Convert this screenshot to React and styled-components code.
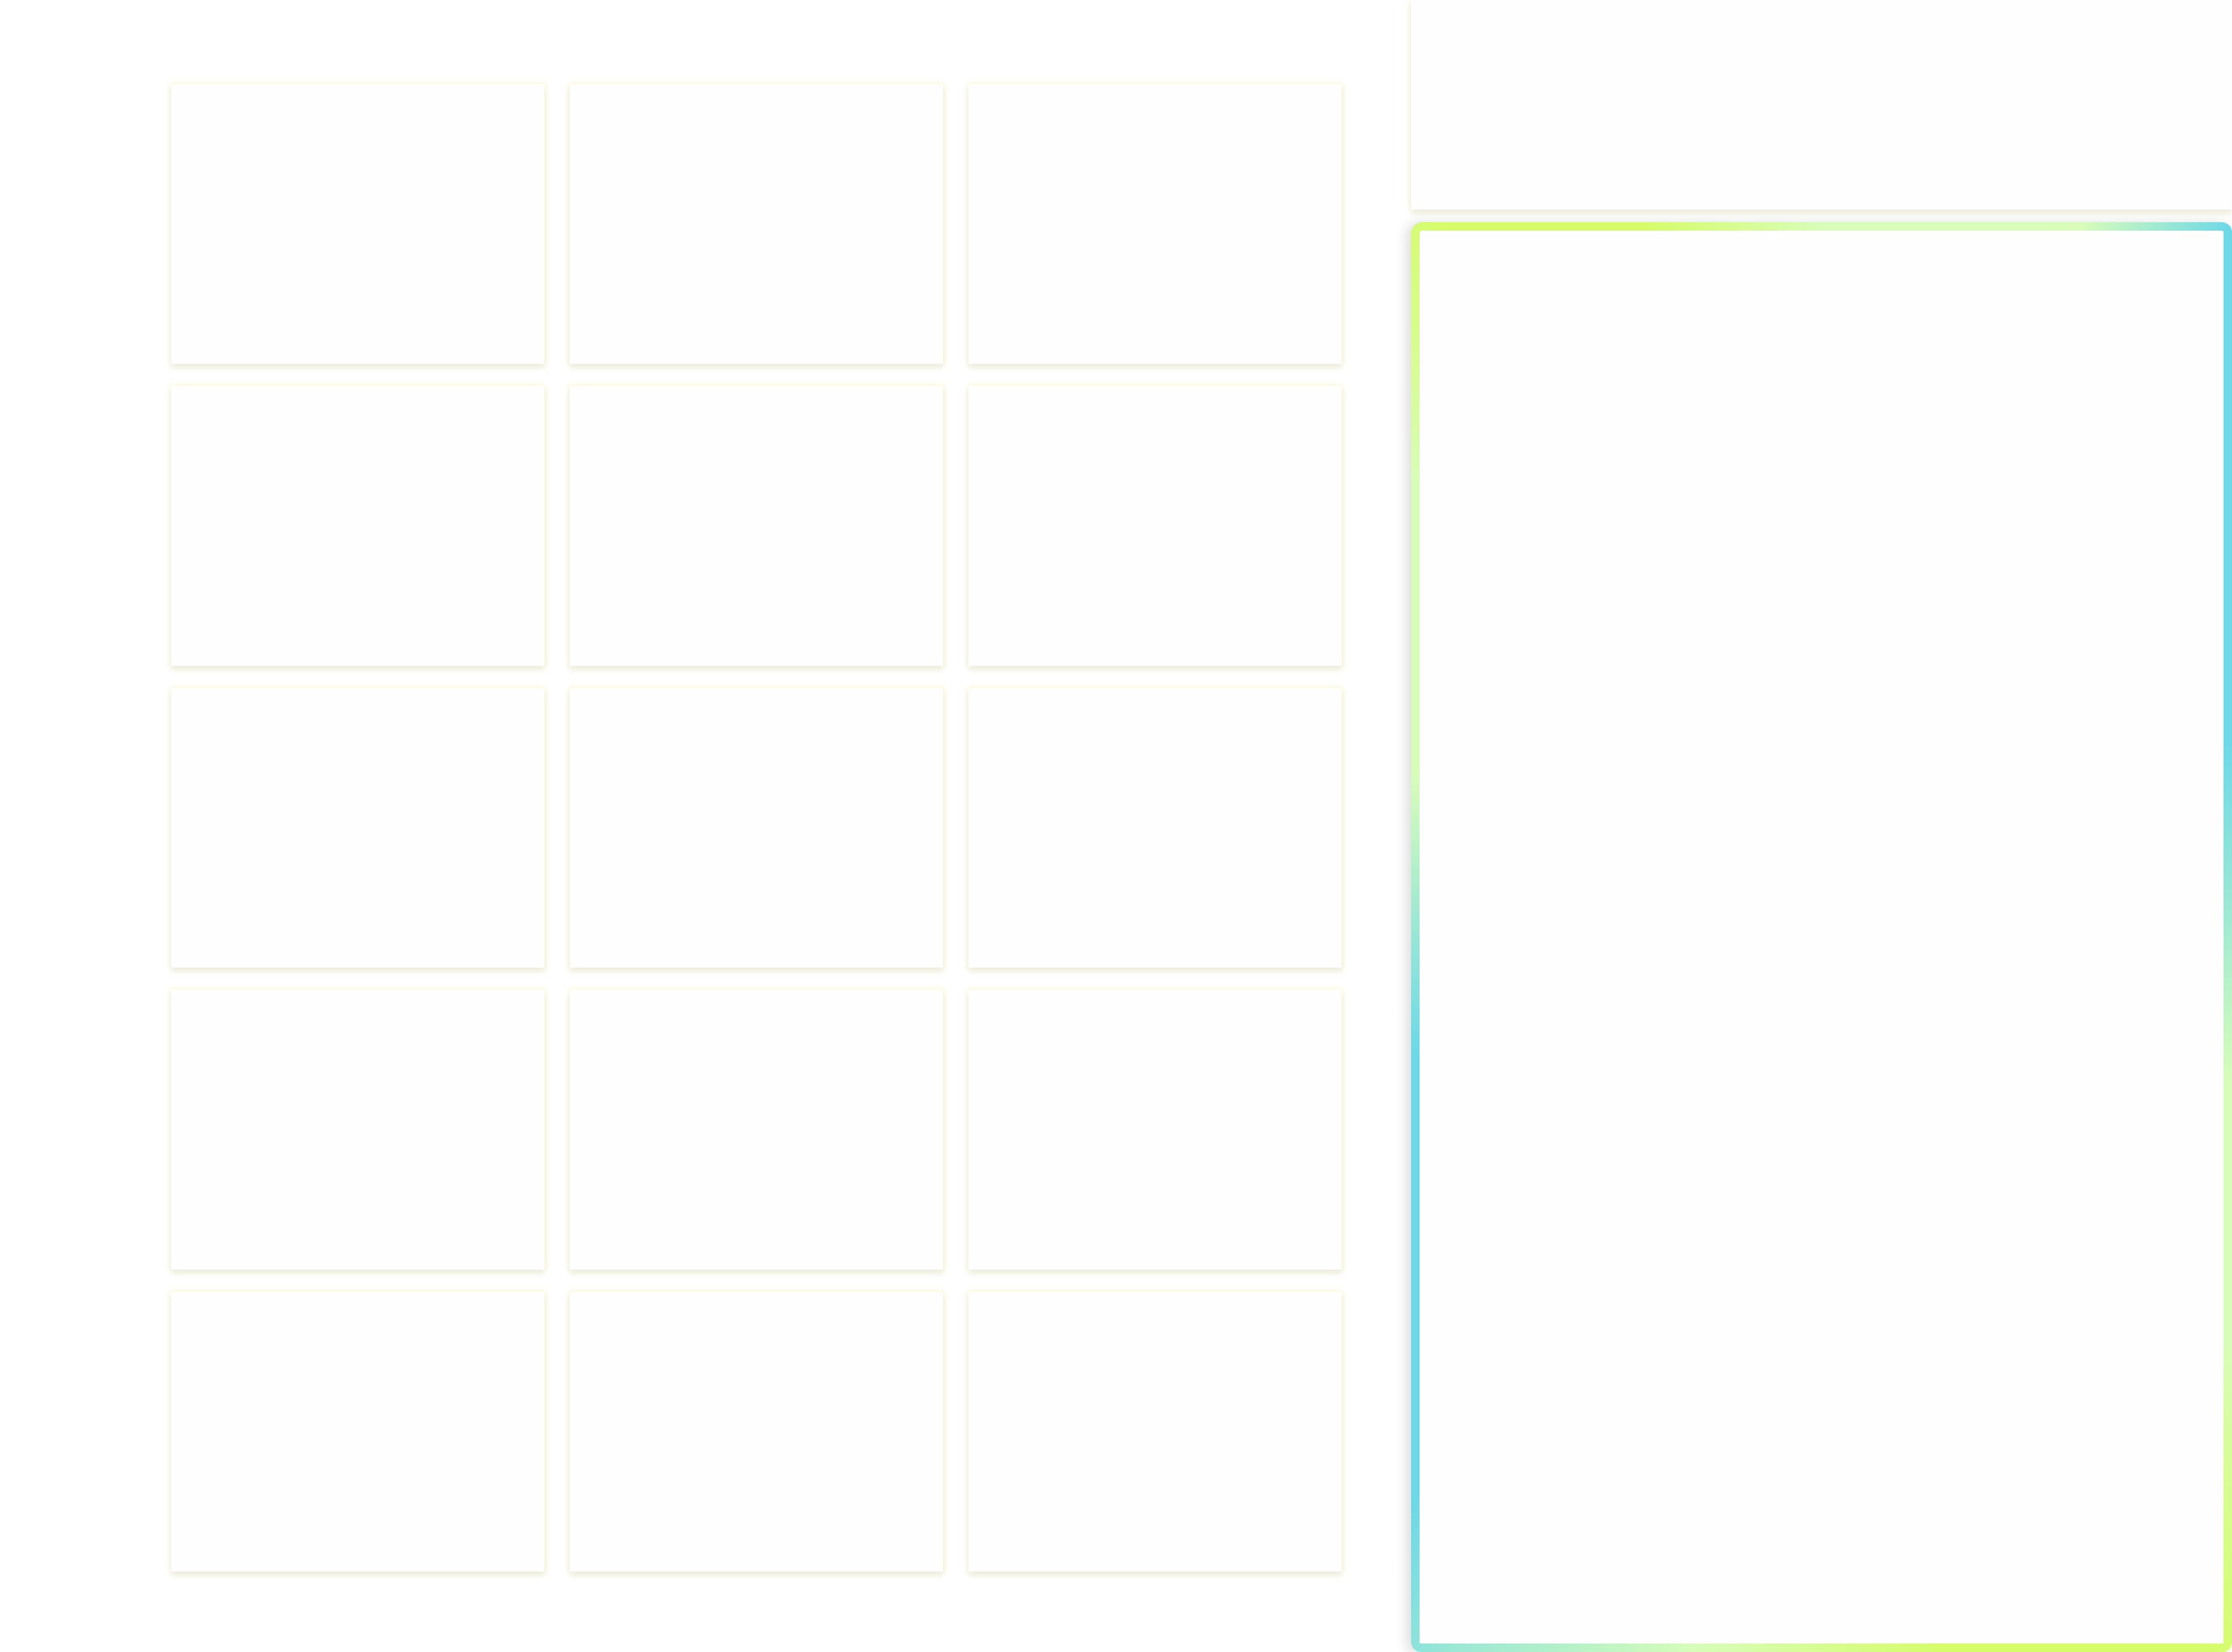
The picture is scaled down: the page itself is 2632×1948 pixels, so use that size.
import styled, { createGlobalStyle } from "styled-components";

const GlobalStyle = createGlobalStyle`
  html, body {
    margin: 0;
    padding: 0;
    background: #ffffff;
    font-family: "Inter", "Liberation Sans", sans-serif;
  }
  * {
    box-sizing: border-box;
  }
`;

const Page = styled.div`
  width: 2632px;
  height: 1948px;
  display: flex;
  overflow: hidden;
  background: #ffffff;
`;

const Board = styled.main`
  width: 1664px;
  flex-shrink: 0;
  padding: 99px 0 0 202px;
`;

const Grid = styled.div`
  display: grid;
  grid-template-columns: repeat(3, 440px);
  grid-auto-rows: 330px;
  column-gap: 30px;
  row-gap: 26px;
`;

const Tile = styled.div`
  background: #fefefe;
  box-shadow: 0 0 6px 1px rgba(248, 248, 200, 0.7),
    0 4px 7px rgba(190, 190, 160, 0.35);
`;

const Side = styled.aside`
  flex: 1;
  display: flex;
  flex-direction: column;
  gap: 15px;
`;

const Header = styled.div`
  height: 247px;
  background: #fefefe;
  box-shadow: 0 0 6px 1px rgba(248, 248, 200, 0.7),
    0 4px 7px rgba(190, 190, 160, 0.35);
`;

const Stage = styled.section`
  height: 1686px;
  border: 10px solid transparent;
  border-radius: 12px;
  background:
    linear-gradient(#fefefe, #fefefe) padding-box,
    conic-gradient(
      from 0deg at 50% 50%,
      #d8fdb9 0deg,
      #d9fdb9 20deg,
      #6cd8e8 30deg,
      #6cd8e8 64deg,
      #9ce8d4 86deg,
      #d8fdb9 110deg,
      #d8fdb9 135deg,
      #d6fc6a 152deg,
      #d6fc6a 170deg,
      #d8fdb9 190deg,
      #9ce8d4 207deg,
      #6cd8e8 216deg,
      #6cd8e8 254deg,
      #9ce8d4 272deg,
      #d8fdb9 292deg,
      #d8fdb9 318deg,
      #d6fc6a 332deg,
      #d6fc6a 346deg,
      #d8fdb9 360deg
    ) border-box;
  box-shadow: -4px 2px 16px rgba(0, 0, 0, 0.16);
`;

const tiles = Array.from({ length: 15 }, (_, i) => i);

export default function App() {
  return (
    <>
      <GlobalStyle />
      <Page>
        <Board>
          <Grid>
            {tiles.map((i) => (
              <Tile key={i} />
            ))}
          </Grid>
        </Board>
        <Side>
          <Header />
          <Stage />
        </Side>
      </Page>
    </>
  );
}
